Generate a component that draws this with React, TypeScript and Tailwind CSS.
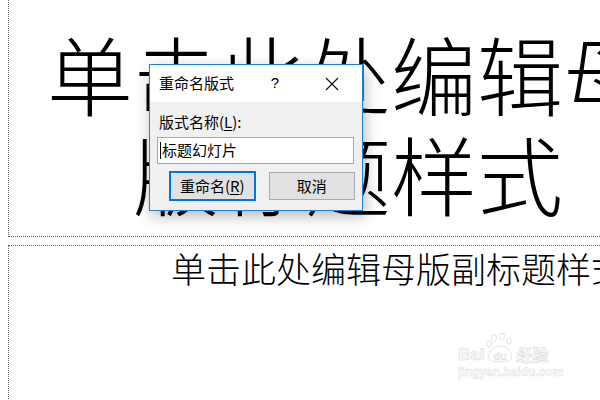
import React from "react";

const cjk = { fontFamily: '"Noto Sans CJK SC", "Noto Sans", sans-serif' };

function Watermark() {
  return (
    <div className="absolute left-[458px] top-[332px] flex flex-col items-start select-none" style={cjk}>
      <div className="flex items-end gap-[1px]">
        <span className="text-[17px] leading-[17px] font-bold text-white [-webkit-text-stroke:0.7px_#dcdcdc]" style={{ fontFamily: '"Liberation Sans", sans-serif' }}>
          Bai
        </span>
        <svg width="30" height="32" viewBox="0 0 30 32" className="-mb-[1px]">
          <g fill="white" stroke="#dcdcdc" strokeWidth="0.8">
            <ellipse cx="9" cy="6" rx="2.6" ry="3.4" />
            <ellipse cx="17" cy="4.5" rx="2.6" ry="3.4" />
            <ellipse cx="24" cy="9" rx="2.4" ry="3.2" />
            <ellipse cx="4" cy="12" rx="2.4" ry="3.2" />
            <path d="M4 27 C2 19 10 14 15 14 C22 14 28 19 26 27 C25 31 5 31 4 27 Z" />
          </g>
          <text x="15" y="28" textAnchor="middle" fontSize="11" fontWeight="bold" fill="white" stroke="#dcdcdc" strokeWidth="0.6" fontFamily="Liberation Sans, sans-serif">
            du
          </text>
        </svg>
        <span className="text-[16px] leading-[17px] font-bold text-white [-webkit-text-stroke:0.7px_#dcdcdc]">经验</span>
      </div>
      <span className="mt-[3px] text-[12px] leading-[12px] font-bold text-white [-webkit-text-stroke:0.5px_#dddddd]" style={{ fontFamily: '"Liberation Sans", sans-serif' }}>
        jingyan.baidu.com
      </span>
    </div>
  );
}

function Dialog() {
  return (
    <div
      className="absolute left-[149px] top-[64px] w-[214px] h-[147px] border border-[#1c83d6] bg-[#f0f0f0] flex flex-col shadow-[2px_5px_14px_rgba(0,0,0,0.28)]"
      style={cjk}
    >
      <div className="h-[37px] bg-white flex items-center pl-[9px] text-[15px] text-black shrink-0">
        <span className="w-[110px]">重命名版式</span>
        <span className="w-[12px] text-center text-[15px]" style={{ fontFamily: '"Liberation Sans", sans-serif' }}>?</span>
        <span className="ml-[44px]">
          <svg width="14" height="14" viewBox="0 0 14 14">
            <path d="M1 1 L13 13 M13 1 L1 13" stroke="#111" strokeWidth="1.1" />
          </svg>
        </span>
      </div>
      <div className="flex flex-col pl-[7px] pr-[7px] pt-[9px]">
        <div className="pl-[2px] text-[15px] leading-[22px] text-black">
          版式名称(<span className="underline underline-offset-2">L</span>):
        </div>
        <div className="mt-[4px] h-[27px] w-[197px] border border-[#a8a8a8] bg-white flex items-center pl-[2px] text-[15px] text-black">
          <span className="inline-block w-[1px] h-[17px] bg-black mr-[1px]" />
          <span>标题幻灯片</span>
        </div>
        <div className="mt-[7px] flex items-start pl-[12px] gap-[13px]">
          <div className="w-[87px] h-[30px] border-2 border-[#0078d7] bg-[#e1e1e1] flex items-center justify-center text-[15px] text-black">
            重命名(<span className="underline underline-offset-2">R</span>)
          </div>
          <div className="mt-[1px] w-[87px] h-[28px] border border-[#adadad] bg-[#e1e1e1] flex items-center justify-center text-[15px] text-black">
            取消
          </div>
        </div>
      </div>
    </div>
  );
}

export default function App() {
  return (
    <div className="relative w-[600px] h-[400px] overflow-hidden bg-white">
      <div className="flex flex-col pl-[8px]" style={cjk}>
        <div className="w-[680px] h-[237px] shrink-0 border-l border-r border-b border-dotted border-[#666666] pt-[23px]">
          <div className="text-center text-[86px] leading-[100px] font-light text-black">单击此处编辑母版标题样式</div>
        </div>
        <div className="mt-[8px] w-[780px] h-[200px] shrink-0 border-l border-t border-dotted border-[#666666] pt-[2px]">
          <div className="text-center text-[35px] leading-[40px] font-light text-black">单击此处编辑母版副标题样式</div>
        </div>
      </div>
      <Watermark />
      <Dialog />
    </div>
  );
}
